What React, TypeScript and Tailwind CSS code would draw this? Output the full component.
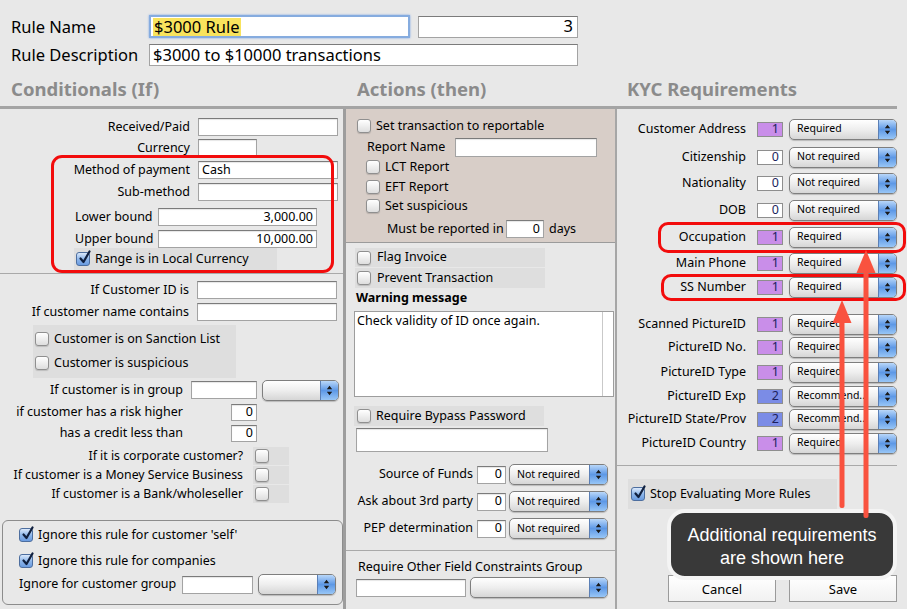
import React from 'react';

type Cls = { className?: string };

function Field({ className = '', value = '', right = false }: Cls & { value?: string; right?: boolean }) {
  return (
    <div
      className={`bg-white border border-[#a3a3a3] border-t-[#7b7b7b] shadow-[inset_0_1px_1px_rgba(0,0,0,0.1)] flex items-center px-[3px] text-[12.5px] leading-none shrink-0 ${right ? 'justify-end' : ''} ${className}`}
    >
      {value}
    </div>
  );
}

function Check({ checked = false }: { checked?: boolean }) {
  if (checked) {
    return (
      <span className="relative w-[14px] h-[14px] rounded-[3px] border border-[#4d6e9f] bg-linear-to-b from-[#dbe9fb] via-[#8fb7ea] to-[#6a9be0] shrink-0">
        <svg className="absolute left-[1px] top-[-3px]" width="13" height="15" viewBox="0 0 13 15">
          <path d="M2.5 8.5 L5.5 12 L11.5 1.5" stroke="#10203f" strokeWidth="2.2" fill="none" strokeLinecap="round" strokeLinejoin="round" />
        </svg>
      </span>
    );
  }
  return (
    <span className="w-[14px] h-[14px] rounded-[3px] border border-[#8f8f8f] bg-linear-to-b from-white to-[#dedede] shadow-[0_1px_1px_rgba(0,0,0,0.15)] shrink-0" />
  );
}

function Popup({ className = '', text = '' }: Cls & { text?: string }) {
  return (
    <div
      className={`h-[21px] rounded-[5px] border border-[#7e7e7e] flex overflow-hidden bg-linear-to-b from-white via-[#eeeeee] to-[#d6d6d6] shadow-[0_1px_1px_rgba(0,0,0,0.2)] shrink-0 ${className}`}
    >
      <div className="flex-1 flex items-center pl-[7px] text-[10.5px] whitespace-nowrap overflow-hidden">{text}</div>
      <div className="w-[18px] border-l border-[#5b7fb5] bg-linear-to-b from-[#b9d7f9] via-[#5d98e6] to-[#98c6f6] flex items-center justify-center">
        <svg width="7" height="11" viewBox="0 0 7 11">
          <path d="M3.5 0.8 L6.2 4.2 H0.8 Z M3.5 10.2 L6.2 6.8 H0.8 Z" fill="#1a1a1a" />
        </svg>
      </div>
    </div>
  );
}

function Num({ v }: { v: number }) {
  const bg = v === 1 ? 'bg-[#c98ee9]' : v === 2 ? 'bg-[#7b8ce6]' : 'bg-white';
  return (
    <div className={`ml-[11px] w-[26px] h-[15px] border border-[#8e8e8e] ${bg} flex items-center justify-end pr-[3px] text-[12.5px] leading-none text-[#1b1f5e] shrink-0`}>
      {v}
    </div>
  );
}

function KycRow({ label, v, text, className = '' }: Cls & { label: string; v: number; text: string }) {
  return (
    <div className={`flex items-center h-[22px] ${className}`}>
      <span className="w-[129px] text-right whitespace-nowrap">{label}</span>
      <Num v={v} />
      <Popup className="ml-[6px] w-[108px]" text={text} />
    </div>
  );
}

export default function App() {
  return (
    <div className="relative w-[907px] h-[609px] overflow-hidden bg-[#e8e8e8] text-black text-[12.5px] font-['Noto_Sans',sans-serif]">
      {/* header */}
      <div className="pt-[15px] pl-[11px] h-[106px]">
        <div className="flex items-center h-[23px]">
          <span className="w-[138px] text-[16.5px] pt-[1px]">Rule Name</span>
          <div className="w-[261px] h-[23px] bg-white border-[2px] border-[#86acdf] shadow-[0_0_2px_#7aa6e6] flex items-center px-[2px] text-[16.5px]">
            <span className="bg-[#f8e35d] px-[1px] leading-[18px]">$3000 Rule</span>
          </div>
          <div className="ml-[8px] w-[160px] h-[22px] bg-white border border-[#a3a3a3] border-t-[#7b7b7b] flex items-center justify-end pr-[4px] text-[16.5px]">
            3
          </div>
        </div>
        <div className="flex items-center h-[22px] mt-[6px]">
          <span className="w-[138px] text-[16.5px] whitespace-nowrap">Rule Description</span>
          <div className="w-[429px] h-[22px] bg-white border border-[#a3a3a3] border-t-[#7b7b7b] flex items-center px-[3px] text-[16.5px] whitespace-nowrap">
            $3000 to $10000 transactions
          </div>
        </div>
        <div className="flex items-center mt-[11px] h-[24px] text-[18.5px] font-bold text-[#8b8b8b]">
          <span className="w-[346px]">Conditionals (If)</span>
          <span className="w-[270px]">Actions (then)</span>
          <span>KYC Requirements</span>
        </div>
      </div>

      {/* body */}
      <div className="flex w-[897px] border-t-[3px] border-[#a4a4a4] h-[503px]">
        {/* left column */}
        <div className="w-[343px] flex flex-col">
          <div className="flex items-center h-[18px] mt-[9px]">
            <span className="w-[190px] text-right">Received/Paid</span>
            <Field className="ml-[8px] w-[140px] h-[18px]" />
          </div>
          <div className="flex items-center h-[18px] mt-[3px]">
            <span className="w-[190px] text-right">Currency</span>
            <Field className="ml-[8px] w-[59px] h-[18px]" />
          </div>
          <div className="flex items-center h-[18px] mt-[4px]">
            <span className="w-[190px] text-right">Method of payment</span>
            <Field className="ml-[8px] w-[140px] h-[18px]" value="Cash" />
          </div>
          <div className="flex items-center h-[18px] mt-[4px]">
            <span className="w-[190px] text-right">Sub-method</span>
            <Field className="ml-[8px] w-[140px] h-[18px]" />
          </div>
          <div className="flex items-center h-[18px] mt-[7px] pl-[75px]">
            <span className="w-[83px]">Lower bound</span>
            <Field className="w-[159px] h-[18px]" value="3,000.00" right />
          </div>
          <div className="flex items-center h-[18px] mt-[4px] pl-[75px]">
            <span className="w-[83px]">Upper bound</span>
            <Field className="w-[159px] h-[18px]" value="10,000.00" right />
          </div>
          <div className="ml-[74px] w-[203px] h-[22px] bg-[#dedede] flex items-center pl-[2px]">
            <Check checked />
            <span className="ml-[5px]">Range is in Local Currency</span>
          </div>
          <div className="mt-[3px] h-px bg-[#a9a9a9]" />
          <div className="flex items-center h-[18px] mt-[7px]">
            <span className="w-[189px] text-right">If Customer ID is</span>
            <Field className="ml-[8px] w-[140px] h-[18px]" />
          </div>
          <div className="flex items-center h-[18px] mt-[4px]">
            <span className="w-[189px] text-right">If customer name contains</span>
            <Field className="ml-[8px] w-[140px] h-[18px]" />
          </div>
          <div className="ml-[33px] mt-[4px] w-[203px] h-[53px] bg-[#dedede] flex flex-col pl-[2px]">
            <div className="flex items-center h-[20px] mt-[4px]">
              <Check />
              <span className="ml-[5px]">Customer is on Sanction List</span>
            </div>
            <div className="flex items-center h-[20px] mt-[4px]">
              <Check />
              <span className="ml-[5px]">Customer is suspicious</span>
            </div>
          </div>
          <div className="flex items-center h-[20px] mt-[2px]">
            <span className="w-[183px] text-right">If customer is in group</span>
            <Field className="ml-[8px] w-[66px] h-[18px]" />
            <Popup className="ml-[5px] w-[77px]" />
          </div>
          <div className="flex items-center h-[17px] mt-[4px]">
            <span className="w-[183px] text-right whitespace-nowrap">if customer has a risk higher</span>
            <Field className="ml-[48px] w-[26px] h-[17px]" value="0" right />
          </div>
          <div className="flex items-center h-[17px] mt-[4px]">
            <span className="w-[183px] text-right">has a credit less than</span>
            <Field className="ml-[48px] w-[26px] h-[17px]" value="0" right />
          </div>
          {['If it is corporate customer?', 'If customer is a Money Service Business', 'If customer is a Bank/wholeseller'].map((t, i) => (
            <div key={t} className={`flex items-center h-[18px] ${i === 0 ? 'mt-[5px]' : 'mt-[1px]'}`}>
              <span className="w-[243px] text-right whitespace-nowrap text-[12.3px]">{t}</span>
              <div className="ml-[10px] w-[36px] h-[18px] bg-[#dedede] flex items-center pl-[2px]">
                <Check />
              </div>
            </div>
          ))}
          <div className="mt-[17px] ml-[2px] w-[341px] h-[85px] rounded-[6px] border border-[#8c8c8c] flex flex-col pl-[16px]">
            <div className="flex items-center h-[18px] mt-[5px]">
              <Check checked />
              <span className="ml-[5px]">Ignore this rule for customer 'self'</span>
            </div>
            <div className="flex items-center h-[18px] mt-[8px]">
              <Check checked />
              <span className="ml-[5px]">Ignore this rule for companies</span>
            </div>
            <div className="flex items-center h-[21px] mt-[4px]">
              <span className="w-[163px] whitespace-nowrap">Ignore for customer group</span>
              <Field className="w-[71px] h-[18px]" />
              <Popup className="ml-[5px] w-[78px]" />
            </div>
          </div>
        </div>

        {/* divider */}
        <div className="w-[3px] bg-[#9d9d9d]" />

        {/* middle column */}
        <div className="w-[269px] flex flex-col">
          <div className="h-[134px] bg-[#d8cec8] border-b border-[#9b9b9b] flex flex-col">
            <div className="flex items-center h-[16px] mt-[9px] pl-[11px]">
              <Check />
              <span className="ml-[5px]">Set transaction to reportable</span>
            </div>
            <div className="flex items-center h-[19px] mt-[4px] pl-[21px]">
              <span className="w-[88px]">Report Name</span>
              <Field className="w-[142px] h-[19px]" />
            </div>
            <div className="flex items-center h-[16px] mt-[2px] pl-[20px]">
              <Check />
              <span className="ml-[5px]">LCT Report</span>
            </div>
            <div className="flex items-center h-[16px] mt-[4px] pl-[20px]">
              <Check />
              <span className="ml-[5px]">EFT Report</span>
            </div>
            <div className="flex items-center h-[16px] mt-[3px] pl-[20px]">
              <Check />
              <span className="ml-[5px]">Set suspicious</span>
            </div>
            <div className="flex items-center h-[18px] mt-[6px] pl-[41px]">
              <span className="w-[119px] whitespace-nowrap">Must be reported in</span>
              <Field className="w-[38px] h-[18px]" value="0" right />
              <span className="ml-[5px]">days</span>
            </div>
          </div>
          <div className="ml-[9px] mt-[5px] w-[190px] h-[19px] bg-[#dedede] flex items-center pl-[2px]">
            <Check />
            <span className="ml-[6px]">Flag Invoice</span>
          </div>
          <div className="ml-[9px] mt-[1px] w-[190px] h-[20px] bg-[#dedede] flex items-center pl-[2px]">
            <Check />
            <span className="ml-[6px]">Prevent Transaction</span>
          </div>
          <div className="pl-[10px] h-[20px] flex items-center font-bold">Warning message</div>
          <div className="ml-[8px] mt-[3px] w-[260px] h-[86px] bg-white border border-[#9d9d9d] flex">
            <div className="w-[248px] border-r border-[#c9c9c9] px-[2px] pt-[1px] leading-[16px]">
              Check validity of ID once again.
            </div>
          </div>
          <div className="ml-[8px] mt-[9px] w-[190px] h-[20px] bg-[#dedede] flex items-center pl-[3px]">
            <Check />
            <span className="ml-[5px]">Require Bypass Password</span>
          </div>
          <Field className="ml-[10px] mt-[2px] w-[192px] h-[24px]" />
          {['Source of Funds', 'Ask about 3rd party', 'PEP determination'].map((t, i) => (
            <div key={t} className={`flex items-center h-[21px] ${i === 0 ? 'mt-[12px]' : 'mt-[6px]'}`}>
              <span className="w-[127px] text-right whitespace-nowrap">{t}</span>
              <Field className="ml-[4px] w-[29px] h-[18px]" value="0" right />
              <Popup className="ml-[3px] w-[99px]" text="Not required" />
            </div>
          ))}
          <div className="mt-[11px] h-px bg-[#a9a9a9]" />
          <div className="pl-[12px] mt-[8px] h-[17px] flex items-center whitespace-nowrap">Require Other Field Constraints Group</div>
          <div className="flex items-center h-[21px] mt-[1px] pl-[10px]">
            <Field className="w-[110px] h-[18px]" />
            <Popup className="ml-[4px] w-[138px]" />
          </div>
        </div>

        {/* KYC column */}
        <div className="w-[282px] border-l-[2px] border-[#a6a6a6] flex flex-col">
          <KycRow className="mt-[9px]" label="Customer Address" v={1} text="Required" />
          <KycRow className="mt-[6px]" label="Citizenship" v={0} text="Not required" />
          <KycRow className="mt-[4px]" label="Nationality" v={0} text="Not required" />
          <KycRow className="mt-[5px]" label="DOB" v={0} text="Not required" />
          <KycRow className="mt-[5px]" label="Occupation" v={1} text="Required" />
          <KycRow className="mt-[4px]" label="Main Phone" v={1} text="Required" />
          <KycRow className="mt-[2px]" label="SS Number" v={1} text="Required" />
          <KycRow className="mt-[15px]" label="Scanned PictureID" v={1} text="Required" />
          <KycRow className="mt-[1px]" label="PictureID No." v={1} text="Required" />
          <KycRow className="mt-[3px]" label="PictureID Type" v={1} text="Required" />
          <KycRow className="mt-[2px]" label="PictureID Exp" v={2} text="Recommend..." />
          <KycRow className="mt-[1px]" label="PictureID State/Prov" v={2} text="Recommend..." />
          <KycRow className="mt-[2px]" label="PictureID Country" v={1} text="Required" />
          <div className="mt-[11px] w-[280px] h-px bg-[#a9a9a9]" />
          <div className="ml-[11px] mt-[13px] w-[209px] h-[30px] bg-[#dedede] flex items-center pl-[3px]">
            <Check checked />
            <span className="ml-[5px]">Stop Evaluating More Rules</span>
          </div>
          <div className="flex mt-[66px] ml-[51px] gap-[13px]">
            <div className="w-[108px] h-[27px] border border-[#9a9a9a] bg-linear-to-b from-white to-[#f1f1f1] flex items-center justify-center pt-[3px] text-[13px]">
              Cancel
            </div>
            <div className="w-[108px] h-[27px] border border-[#9a9a9a] bg-linear-to-b from-white to-[#f1f1f1] flex items-center justify-center pt-[3px] text-[13px]">
              Save
            </div>
          </div>
        </div>
      </div>

      {/* annotations */}
      <div className="absolute left-[51px] top-[155px] w-[283px] h-[118px] border-[3px] border-[#f20c0c] rounded-[11px]" />
      <div className="absolute left-[658px] top-[222px] w-[248px] h-[31px] border-[3px] border-[#f20c0c] rounded-[10px]" />
      <div className="absolute left-[661px] top-[274px] w-[245px] h-[27px] border-[3px] border-[#f20c0c] rounded-[10px]" />
      <div className="absolute left-[667px] top-[509px] w-[230px] h-[71px] rounded-[18px] border-[4px] border-[#f4f4f4] bg-[#393939] flex flex-col items-center justify-center pt-[5px] text-white text-[18px] leading-[23px] font-['Liberation_Sans',Arial,sans-serif]">
        <span>Additional requirements</span>
        <span>are shown here</span>
      </div>
      <svg className="absolute left-0 top-0 pointer-events-none" width="907" height="609" viewBox="0 0 907 609">
        <g fill="#f9523f" stroke="none">
          <rect x="839.5" y="318" width="5" height="190" rx="2" />
          <polygon points="842,300 832.5,323 851.5,323" />
          <rect x="863.5" y="268" width="5" height="250" rx="2" />
          <polygon points="866,250 856.5,273 875.5,273" />
        </g>
      </svg>
    </div>
  );
}
